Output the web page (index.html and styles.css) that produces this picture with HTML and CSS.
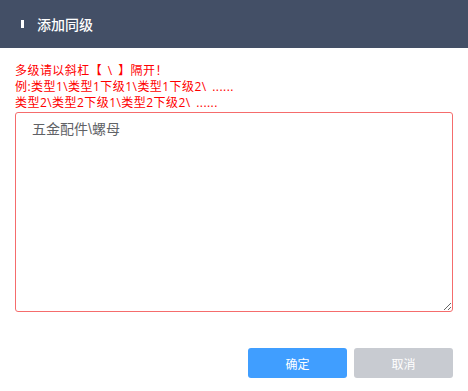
FILE: index.html
```html
<!DOCTYPE html>
<html>
<head>
	<meta charset="UTF-8">
	<title>添加同级</title>
	<link rel="stylesheet" href="styles.css">
</head>
<body>
	<div class="dialog">
		<div class="dialog-header">
			<span class="title-mark"></span>
			<span class="dialog-title">添加同级</span>
		</div>
		<div class="dialog-body">
			<div class="tips">
				<p>多级请以斜杠【 \ 】隔开！</p>
				<p>例:类型1\类型1下级1\类型1下级2\ ......</p>
				<p>类型2\类型2下级1\类型2下级2\ ......</p>
			</div>
			<textarea class="level-input">五金配件\螺母</textarea>
		</div>
		<div class="dialog-footer">
			<button type="button" class="btn btn-primary">确定</button>
			<button type="button" class="btn btn-cancel">取消</button>
		</div>
	</div>
</body>
</html>
```

FILE: styles.css
```css
body {
	margin: 0;
	padding: 0;
	background-color: #ffffff;
	font-family: "Open Sans", "Noto Sans CJK SC", sans-serif;
}

.dialog {
	width: 468px;
}

.dialog-header {
	height: 48px;
	background-color: #434f66;
	display: flex;
	align-items: center;
	padding-left: 21px;
	box-sizing: border-box;
}

.title-mark {
	width: 3px;
	height: 8px;
	background-color: #ffffff;
	margin-right: 13px;
}

.dialog-title {
	color: #ffffff;
	font-size: 14px;
	font-weight: 500;
}

.dialog-body {
	padding: 15px 15px 0 15px;
}

.tips p {
	margin: 0;
	color: #ff0000;
	font-size: 12px;
	line-height: 16px;
	letter-spacing: 0.45px;
	word-spacing: 2px;
}

.level-input {
	display: block;
	width: 100%;
	height: 200px;
	margin-top: 1px;
	box-sizing: border-box;
	padding: 6px 16px;
	border: 1px solid #f56c6c;
	border-radius: 3px;
	font-family: "Liberation Sans", "Noto Sans CJK SC", sans-serif;
	font-size: 14px;
	line-height: 20px;
	color: #606266;
	resize: vertical;
	outline: none;
}

.dialog-footer {
	display: flex;
	justify-content: flex-end;
	gap: 7px;
	padding: 36px 15px 0 15px;
}

.btn {
	width: 99px;
	height: 30px;
	border: none;
	border-radius: 3px;
	color: #ffffff;
	font-size: 12px;
	font-family: "Liberation Sans", "Noto Sans CJK SC", sans-serif;
	cursor: pointer;
}

.btn-primary {
	background-color: #409eff;
}

.btn-cancel {
	background-color: #c8cbd1;
}
```
